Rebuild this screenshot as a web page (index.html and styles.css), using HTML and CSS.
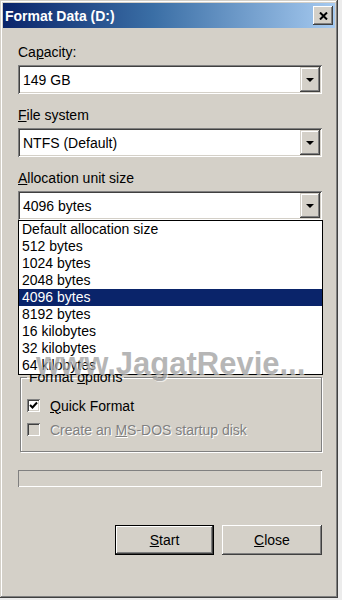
FILE: index.html
```html
<!DOCTYPE html>
<html lang="en">
<head>
    <meta charset="UTF-8">
    <title>Format Data (D:)</title>
    <link rel="stylesheet" href="styles.css">
</head>
<body>
<div class="window">
    <div class="titlebar">
        <span class="title">Format Data (D:)</span>
        <span class="title-close">
            <svg width="9" height="8" viewBox="0 0 9 8"><path d="M1 0.5 L8 7.5 M8 0.5 L1 7.5" stroke="#000" stroke-width="2"/></svg>
        </span>
    </div>
    <div class="content">
        <div class="field">
            <div class="label">Ca<u>p</u>acity:</div>
            <div class="combo">
                <span class="combo-value">149 GB</span>
                <span class="combo-btn"><i class="arrow"></i></span>
            </div>
        </div>
        <div class="field">
            <div class="label"><u>F</u>ile system</div>
            <div class="combo">
                <span class="combo-value">NTFS (Default)</span>
                <span class="combo-btn"><i class="arrow"></i></span>
            </div>
        </div>
        <div class="field">
            <div class="label"><u>A</u>llocation unit size</div>
            <div class="combo combo-open">
                <span class="combo-value">4096 bytes</span>
                <span class="combo-btn"><i class="arrow"></i></span>
                <ul class="dropdown">
                    <li>Default allocation size</li>
                    <li>512 bytes</li>
                    <li>1024 bytes</li>
                    <li>2048 bytes</li>
                    <li class="selected">4096 bytes</li>
                    <li>8192 bytes</li>
                    <li>16 kilobytes</li>
                    <li>32 kilobytes</li>
                    <li>64 kilobytes</li>
                </ul>
            </div>
        </div>

        <fieldset class="group">
            <legend>Format <u>o</u>ptions</legend>
            <div class="check">
                <span class="check-box">
                    <svg width="9" height="9" viewBox="0 0 9 9"><path d="M1 4 L3.5 6.5 L8 1.5" fill="none" stroke="#000" stroke-width="2"/></svg>
                </span>
                <span class="check-label"><u>Q</u>uick Format</span>
            </div>
            <div class="check check-disabled">
                <span class="check-box"></span>
                <span class="check-label">Create an <u>M</u>S-DOS startup disk</span>
            </div>
        </fieldset>

        <div class="progress"></div>

        <div class="buttons">
            <span class="btn btn-default"><u>S</u>tart</span>
            <span class="btn"><u>C</u>lose</span>
        </div>
    </div>
    <div class="watermark">www.JagatRevie...</div>
</div>
</body>
</html>
```

FILE: styles.css
```css
body {
    margin: 0;
    background: #ececec;
    font-family: "Liberation Sans", Arial, sans-serif;
    font-size: 14px;
    color: #000;
}

.window {
    position: relative;
    width: 338px;
    height: 598px;
    box-sizing: border-box;
    padding: 3px;
    background: #d4d0c8;
    box-shadow: inset -1px -1px #404040, inset 1px 1px #d4d0c8,
                inset -2px -2px #808080, inset 2px 2px #fff;
    overflow: hidden;
}

.titlebar {
    height: 25px;
    display: flex;
    align-items: center;
    justify-content: space-between;
    padding: 0 2px 0 2px;
    background: linear-gradient(to right, #0a246a 0%, #3a6ea5 45%, #a6caf0 100%);
}

.title {
    color: #fff;
    font-weight: bold;
    font-size: 14px;
}

.title-close {
    width: 20px;
    height: 19px;
    box-sizing: border-box;
    display: flex;
    align-items: center;
    justify-content: center;
    background: #d4d0c8;
    box-shadow: inset -1px -1px #404040, inset 1px 1px #fff,
                inset -2px -2px #808080, inset 2px 2px #d4d0c8;
}

.content {
    padding: 16px 13px 0 15px;
}

.field {
    margin-bottom: 13px;
}

.label {
    line-height: 16px;
    margin-bottom: 5px;
}

.combo {
    position: relative;
    height: 29px;
    box-sizing: border-box;
    display: flex;
    align-items: center;
    justify-content: space-between;
    padding: 2px 2px 2px 5px;
    background: #fff;
    box-shadow: inset 1px 1px #808080, inset -1px -1px #fff,
                inset 2px 2px #404040, inset -2px -2px #d4d0c8;
}

.combo-btn {
    width: 20px;
    height: 25px;
    box-sizing: border-box;
    display: flex;
    align-items: center;
    justify-content: center;
    background: #d4d0c8;
    box-shadow: inset -1px -1px #404040, inset 1px 1px #d4d0c8,
                inset -2px -2px #808080, inset 2px 2px #fff;
}

.arrow {
    width: 0;
    height: 0;
    border-left: 4px solid transparent;
    border-right: 4px solid transparent;
    border-top: 4px solid #000;
}

.dropdown {
    position: absolute;
    top: 100%;
    left: 0;
    right: -1px;
    margin: 0;
    padding: 0;
    list-style: none;
    background: #fff;
    border: 1px solid #000;
    z-index: 2;
}

.dropdown li {
    height: 17px;
    line-height: 17px;
    padding-left: 3px;
}

.dropdown .selected {
    background: #0a246a;
    color: #fff;
}

.group {
    margin: 149px 0 0 2px;
    padding: 12px 6px 13px 6px;
    border: 1px solid #808080;
    box-shadow: 1px 1px #fff, inset 1px 1px #fff;
}

.group legend {
    padding: 0 2px;
    line-height: 16px;
}

.check {
    display: flex;
    align-items: center;
    height: 17px;
    margin-bottom: 7px;
}

.check:last-child {
    margin-bottom: 0;
}

.check-box {
    width: 13px;
    height: 13px;
    box-sizing: border-box;
    display: flex;
    align-items: center;
    justify-content: center;
    margin-right: 10px;
    background: #fff;
    box-shadow: inset 1px 1px #808080, inset -1px -1px #fff,
                inset 2px 2px #404040, inset -2px -2px #d4d0c8;
}

.check-disabled .check-box {
    background: #d4d0c8;
}

.check-disabled .check-label {
    color: #808080;
    text-shadow: 1px 1px #fff;
}

.progress {
    margin-top: 18px;
    height: 17px;
    box-sizing: border-box;
    box-shadow: inset 1px 1px #808080, inset -1px -1px #fff;
}

.buttons {
    display: flex;
    justify-content: flex-end;
    gap: 8px;
    margin-top: 38px;
}

.btn {
    width: 100px;
    height: 30px;
    box-sizing: border-box;
    display: flex;
    align-items: center;
    justify-content: center;
    background: #d4d0c8;
    box-shadow: inset -1px -1px #404040, inset 1px 1px #fff,
                inset -2px -2px #808080, inset 2px 2px #d4d0c8;
}

.btn-default {
    width: 99px;
    border: 1px solid #000;
}

.watermark {
    position: absolute;
    left: 36px;
    top: 348px;
    font-size: 31px;
    line-height: 1;
    font-weight: bold;
    color: rgba(110, 110, 110, 0.5);
    text-shadow: 1px 1px rgba(255, 255, 255, 0.6);
    white-space: nowrap;
    z-index: 3;
    pointer-events: none;
}
```
